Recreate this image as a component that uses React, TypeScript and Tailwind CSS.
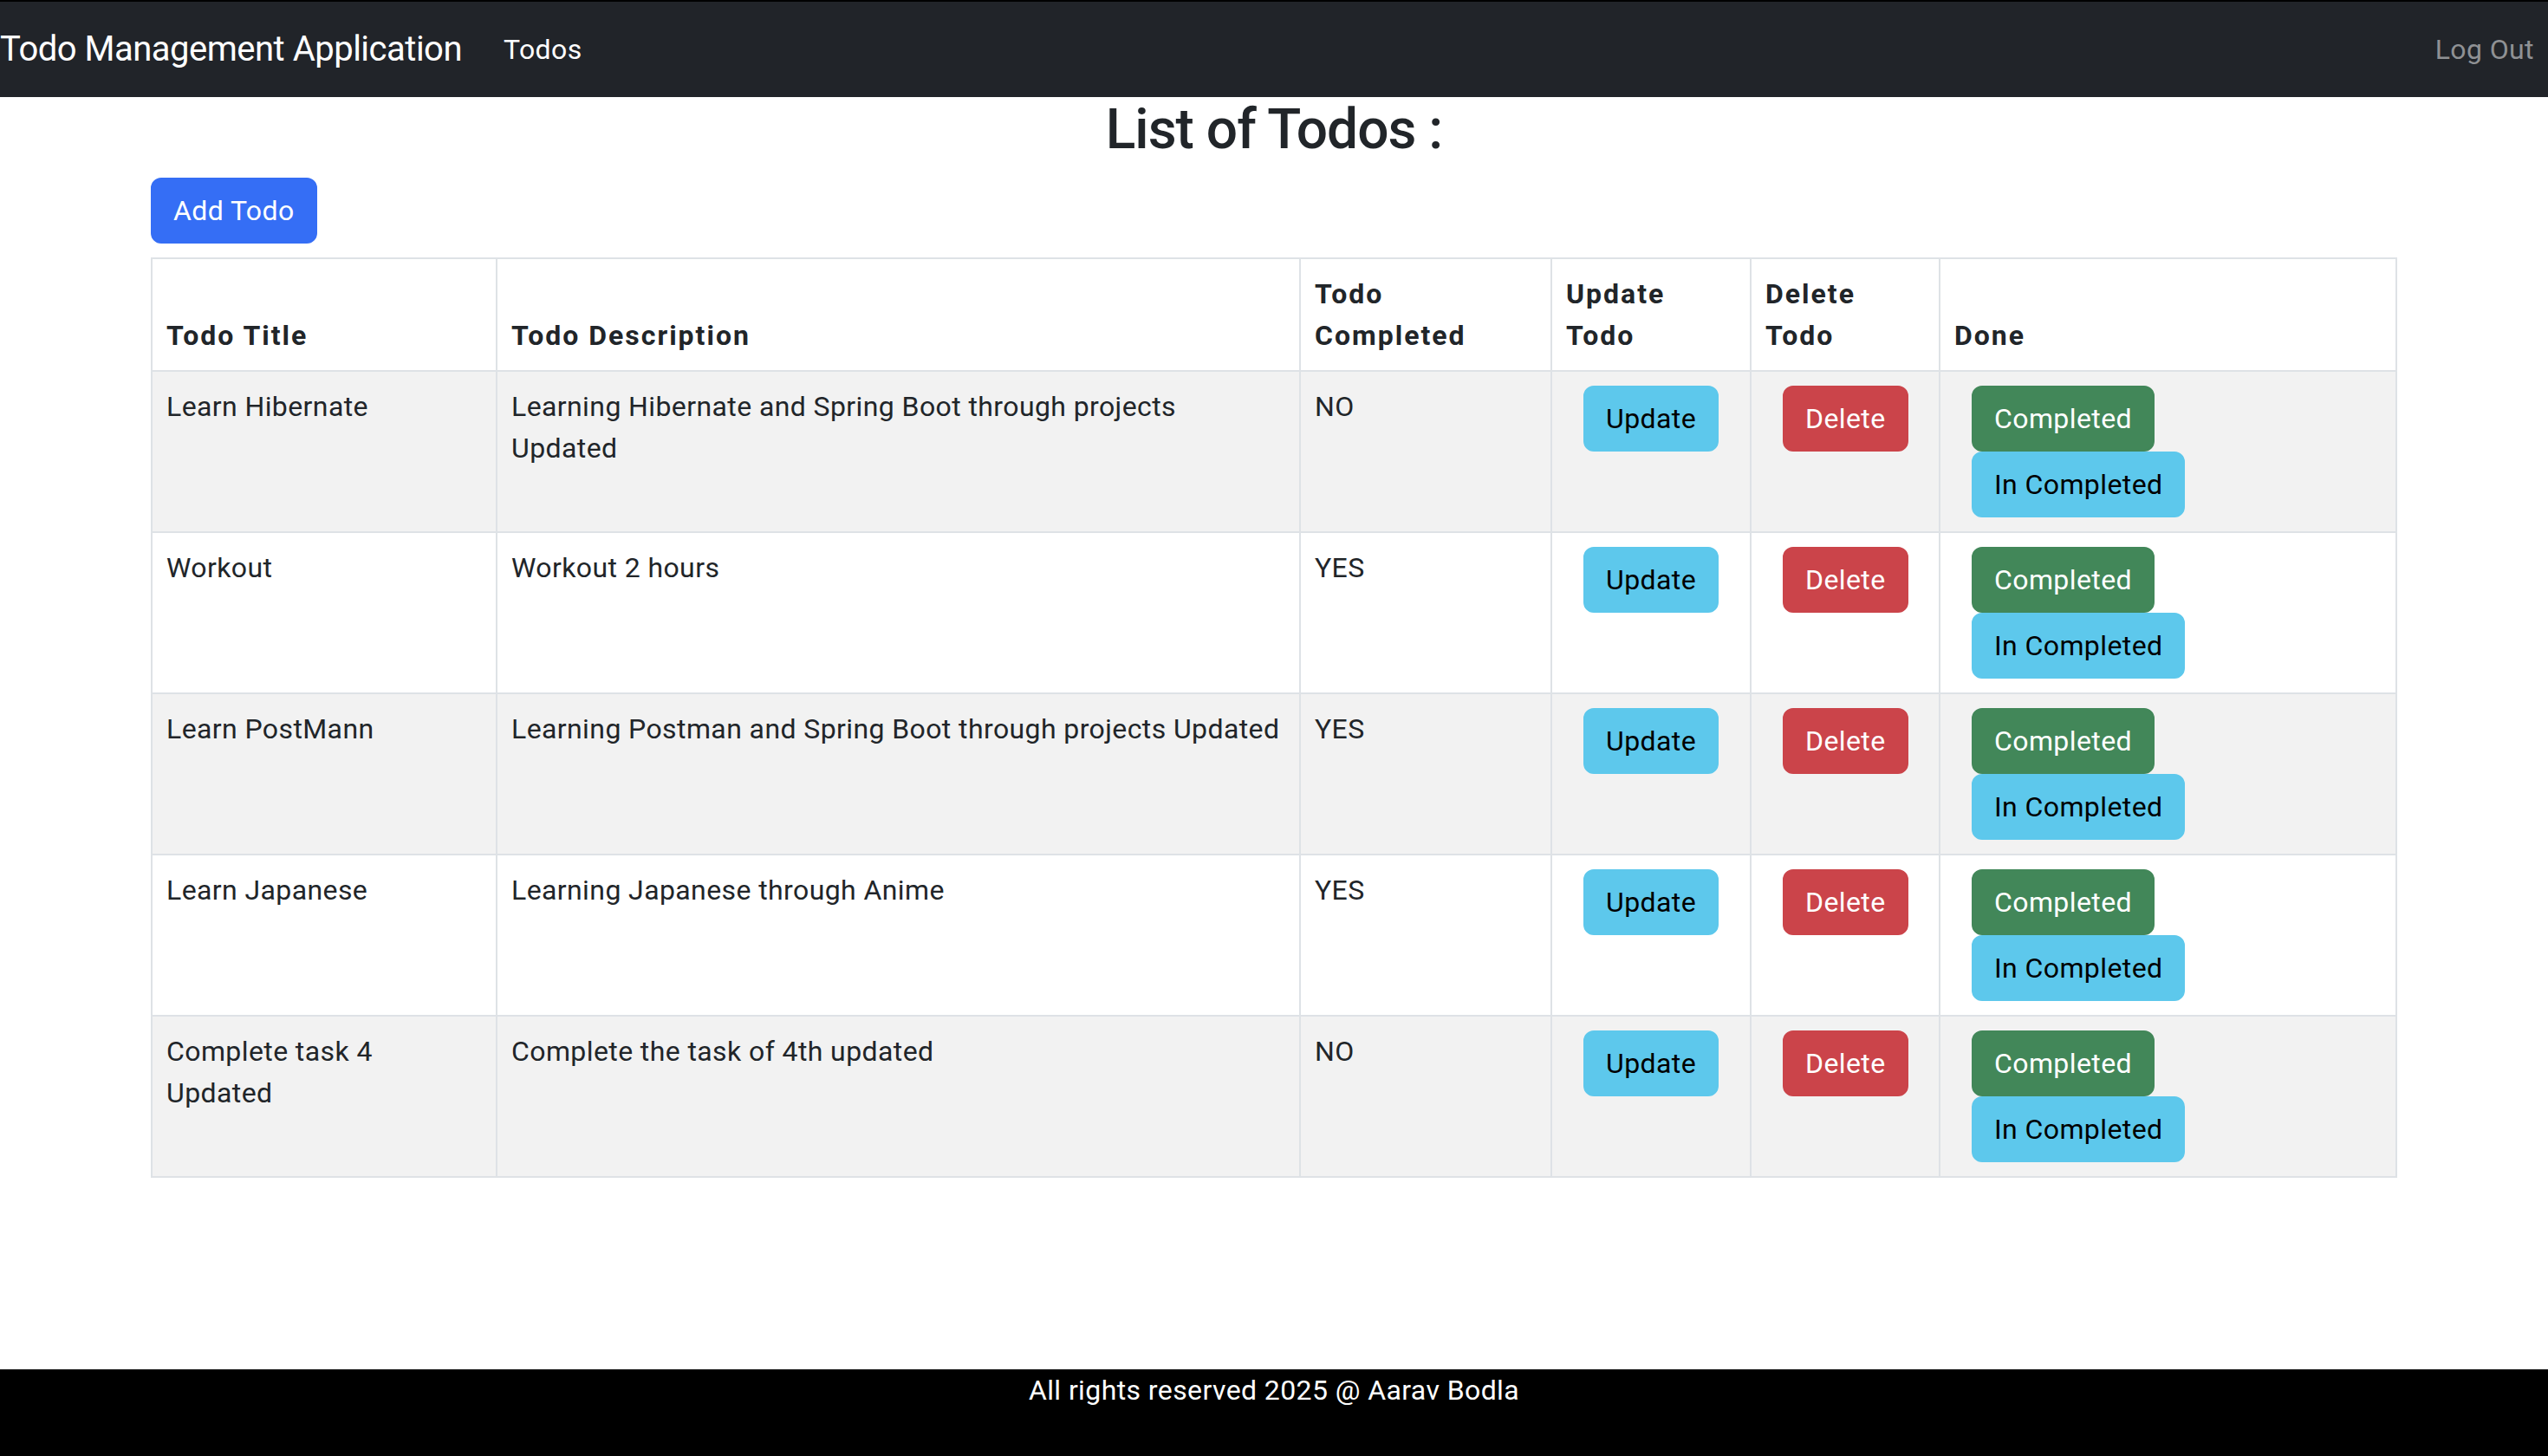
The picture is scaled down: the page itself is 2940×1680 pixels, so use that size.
const todos = [
  {
    title: "Learn Hibernate",
    description: "Learning Hibernate and Spring Boot through projects Updated",
    completed: false
  },
  {
    title: "Workout",
    description: "Workout 2 hours",
    completed: true
  },
  {
    title: "Learn PostMann",
    description: "Learning Postman and Spring Boot through projects Updated",
    completed: true
  },
  {
    title: "Learn Japanese",
    description: "Learning Japanese through Anime",
    completed: true
  },
  {
    title: "Complete task 4 Updated",
    description: "Complete the task of 4th updated",
    completed: false
  }
];

const btn = "rounded-[12px] border-2 px-6 py-3 text-[32px] leading-[48px] whitespace-nowrap";

const Header = () => {
  return (
    <header className="h-[112px] border-t-2 border-black bg-[#212429]">
      <nav className="flex h-full items-center">
        <a href="#" className="mr-8 text-[40px] leading-[60px] tracking-[-0.5px] text-white">
          Todo Management Application
        </a>
        <a href="#" className="px-4 text-[32px] leading-[48px] text-white">
          Todos
        </a>
        <a href="#" className="ml-auto px-4 text-[32px] leading-[48px] text-[#8f9194]">
          Log Out
        </a>
      </nav>
    </header>
  );
};

const Footer = () => {
  return (
    <footer className="mt-auto h-[100px] bg-black text-center text-[32px] leading-[48px] text-white">
      All rights reserved 2025 @ Aarav Bodla
    </footer>
  );
};

const ListTodos = () => {
  return (
    <div className="mx-auto w-[2640px] px-6">
      <h2 className="mb-4 text-center text-[64px] font-medium leading-[1.2] tracking-[-1px]">List of Todos :</h2>
      <button className={`${btn} mb-4 border-[#356ef5] bg-[#356ef5] text-white`}>Add Todo</button>
      <table className="w-[2592px] table-fixed border-collapse text-[32px] leading-[48px]">
        <colgroup>
          <col className="w-[398px]" />
          <col className="w-[927px]" />
          <col className="w-[290px]" />
          <col className="w-[230px]" />
          <col className="w-[218px]" />
          <col />
        </colgroup>
        <thead>
          <tr className="align-bottom [&>th]:border-2 [&>th]:border-[#dee2e6] [&>th]:p-4 [&>th]:text-left [&>th]:font-bold [&>th]:tracking-[2px]">
            <th>Todo Title</th>
            <th>Todo Description</th>
            <th>Todo Completed</th>
            <th>Update Todo</th>
            <th>Delete Todo</th>
            <th>Done</th>
          </tr>
        </thead>
        <tbody>
          {todos.map((todo, index) => (
            <tr
              key={index}
              className={`align-top [&>td]:border-2 [&>td]:border-[#dee2e6] [&>td]:p-4 ${
                index % 2 === 0 ? "bg-[#f2f2f2]" : "bg-white"
              }`}
            >
              <td>{todo.title}</td>
              <td>{todo.description}</td>
              <td>{todo.completed ? "YES" : "NO"}</td>
              <td>
                <button className={`${btn} ml-5 border-[#5dc8ec] bg-[#5dc8ec] text-black`}>Update</button>
              </td>
              <td>
                <button className={`${btn} ml-5 border-[#cb444a] bg-[#cb444a] text-white`}>Delete</button>
              </td>
              <td>
                <div className="flex flex-col items-start">
                  <button className={`${btn} ml-5 border-[#428759] bg-[#428759] text-white`}>Completed</button>
                  <button className={`${btn} ml-5 border-[#5dc8ec] bg-[#5dc8ec] text-black`}>In Completed</button>
                </div>
              </td>
            </tr>
          ))}
        </tbody>
      </table>
    </div>
  );
};

export default function App() {
  return (
    <div className="flex min-h-screen flex-col bg-white font-['Roboto','Liberation_Sans',sans-serif] tracking-[0.4px] text-[#212529]">
      <Header />
      <ListTodos />
      <Footer />
    </div>
  );
}
